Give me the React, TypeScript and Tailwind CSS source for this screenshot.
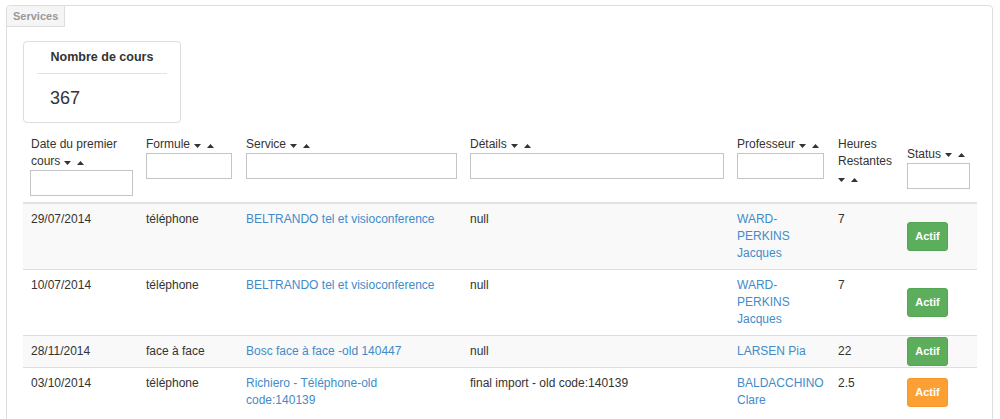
import React from "react";

const Sort = () => (
  <span className="inline-flex items-center gap-[6px] ml-[4px] align-middle relative top-[1px]">
    <svg width="7" height="4" viewBox="0 0 7 4"><polygon points="0,0 7,0 3.5,4" fill="#333" /></svg>
    <svg width="7" height="4" viewBox="0 0 7 4"><polygon points="0,4 7,4 3.5,0" fill="#333" /></svg>
  </span>
);

const Input = ({ w }: { w: string }) => (
  <input className={`block h-[26px] border border-[#c4c4c4] bg-white ${w}`} />
);

const Btn = ({ orange }: { orange?: boolean }) => (
  <span
    className={`inline-flex items-center justify-center w-[41px] h-[29px] rounded-[3px] text-[11px] font-bold text-white ${
      orange ? "bg-[#fca033] border border-[#f5982c]" : "bg-[#5cae5c] border border-[#53a653]"
    }`}
  >
    Actif
  </span>
);

const A = ({ children }: { children: React.ReactNode }) => (
  <span className="text-[#428bca]">{children}</span>
);

const rows = [
  {
    date: "29/07/2014",
    f: "téléphone",
    s: <A>BELTRANDO tel et visioconference</A>,
    d: "null",
    p: (
      <A>
        WARD-<br />PERKINS<br />Jacques
      </A>
    ),
    h: "7",
    o: false,
  },
  {
    date: "10/07/2014",
    f: "téléphone",
    s: <A>BELTRANDO tel et visioconference</A>,
    d: "null",
    p: (
      <A>
        WARD-<br />PERKINS<br />Jacques
      </A>
    ),
    h: "7",
    o: false,
  },
  {
    date: "28/11/2014",
    f: "face à face",
    s: <A>Bosc face à face -old 140447</A>,
    d: "null",
    p: <A>LARSEN Pia</A>,
    h: "22",
    o: false,
  },
  {
    date: "03/10/2014",
    f: "téléphone",
    s: (
      <A>
        Richiero - Téléphone-old<br />code:140139
      </A>
    ),
    d: "final import - old code:140139",
    p: (
      <A>
        BALDACCHINO<br />Clare
      </A>
    ),
    h: "2.5",
    o: true,
  },
];

export default function App() {
  const td = "px-[8px] py-[7px] align-top whitespace-nowrap";
  const th = "px-[8px] pt-[8px] pb-[6px] align-top text-left font-normal";
  return (
    <div
      className="bg-white pt-[5px] pl-[6px] pr-[7px] text-[12px] leading-[17px] text-[#333] min-h-[419px]"
      style={{ fontFamily: '"Liberation Sans", Arial, sans-serif' }}
    >
      <div className="border border-[#dddddd] rounded-[4px] min-h-[430px]">
        <div className="inline-block bg-[#f5f5f5] border-r border-b border-[#dddddd] rounded-tl-[4px] px-[6px] h-[21px] leading-[20px] text-[11px] font-bold text-[#999]">
          Services
        </div>
        <div className="pl-[16px] pr-[15px]">
          <div className="mt-[14px] w-[158px] h-[82px] border border-[#dddddd] rounded-[4px] bg-white">
            <div className="pt-[7px] text-center font-bold text-[12.5px] leading-[17px]">Nombre de cours</div>
            <div className="mx-[13px] mt-[7px] border-t border-[#e3e3e3]" />
            <div className="pl-[26px] mt-[14px] text-[18px] leading-[20px]">367</div>
          </div>
          <table className="mt-[5px] w-full table-fixed border-collapse">
            <colgroup>
              <col className="w-[115px]" />
              <col className="w-[100px]" />
              <col className="w-[224px]" />
              <col className="w-[267px]" />
              <col className="w-[101px]" />
              <col className="w-[69px]" />
              <col className="w-[78px]" />
            </colgroup>
            <thead>
              <tr className="border-b-2 border-[#e2e2e2]">
                <th className={th}>
                  <div className="whitespace-nowrap">Date du premier</div>
                  <div className="whitespace-nowrap">
                    cours
                    <Sort />
                  </div>
                  <div className="-ml-[1px]">
                    <Input w="w-[103px]" />
                  </div>
                </th>
                <th className={th}>
                  <div className="whitespace-nowrap">
                    Formule
                    <Sort />
                  </div>
                  <Input w="w-[86px]" />
                </th>
                <th className={th}>
                  <div className="whitespace-nowrap">
                    Service
                    <Sort />
                  </div>
                  <Input w="w-[211px]" />
                </th>
                <th className={th}>
                  <div className="whitespace-nowrap">
                    Détails
                    <Sort />
                  </div>
                  <Input w="w-[254px]" />
                </th>
                <th className={th}>
                  <div className="whitespace-nowrap">
                    Professeur
                    <Sort />
                  </div>
                  <Input w="w-[87px]" />
                </th>
                <th className={th}>
                  <div>Heures</div>
                  <div>Restantes</div>
                  <div className="-ml-[4px]">
                    <Sort />
                  </div>
                </th>
                <th className="px-[8px] pt-[9px] pb-[5px] align-middle text-left font-normal">
                  <div className="whitespace-nowrap">
                    Status
                    <Sort />
                  </div>
                  <Input w="w-[63px]" />
                </th>
              </tr>
            </thead>
            <tbody>
              {rows.map((r, i) => (
                <tr
                  key={i}
                  className={`border-t border-[#dddddd] first:border-t-0 ${i % 2 === 0 ? "bg-[#f9f9f9]" : "bg-white"}`}
                >
                  <td className={td}>{r.date}</td>
                  <td className={td}>{r.f}</td>
                  <td className={td}>{r.s}</td>
                  <td className={td}>{r.d}</td>
                  <td className={td}>{r.p}</td>
                  <td className={td}>{r.h}</td>
                  <td className="px-[8px] py-0 align-middle">
                    <div className="flex">
                      <Btn orange={r.o} />
                    </div>
                  </td>
                </tr>
              ))}
            </tbody>
          </table>
        </div>
      </div>
    </div>
  );
}
